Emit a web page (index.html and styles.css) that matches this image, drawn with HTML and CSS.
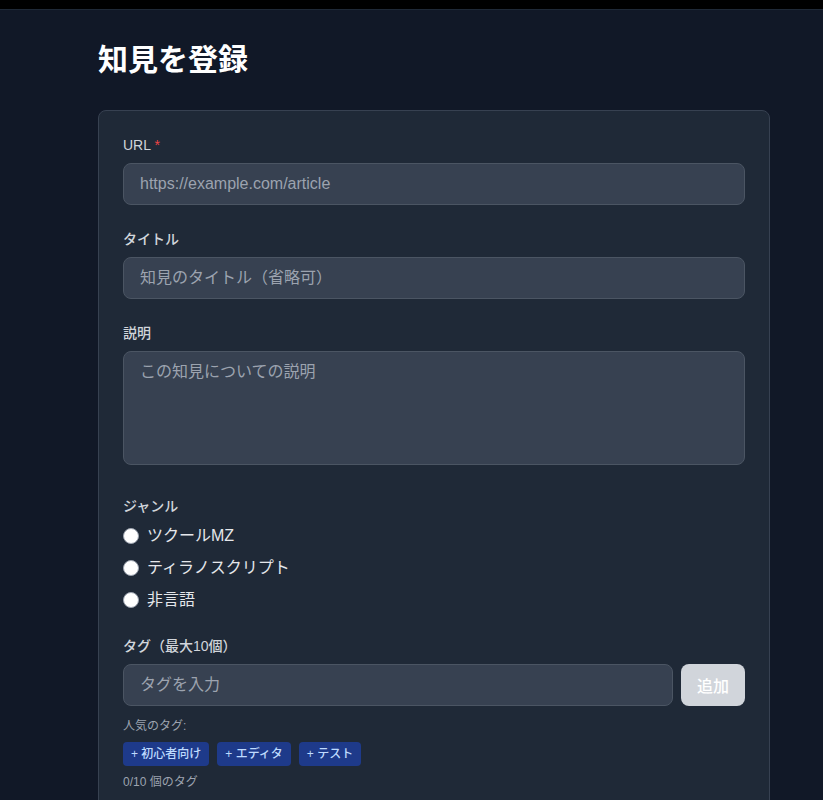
FILE: index.html
```html
<!DOCTYPE html>
<html lang="ja">
<head>
<meta charset="utf-8">
<title>知見を登録</title>
<link rel="stylesheet" href="styles.css">
</head>
<body>
<div class="topbar"></div>
<main class="page">
  <h1 class="title">知見を登録</h1>
  <form class="card">
    <div class="field">
      <label class="label">URL <span class="req">*</span></label>
      <input class="input" type="text" placeholder="https://example.com/article">
    </div>
    <div class="field">
      <label class="label">タイトル</label>
      <input class="input" type="text" placeholder="知見のタイトル（省略可）">
    </div>
    <div class="field">
      <label class="label">説明</label>
      <textarea class="input textarea" rows="4" placeholder="この知見についての説明"></textarea>
    </div>
    <div class="field">
      <label class="label">ジャンル</label>
      <div class="radios">
        <label class="radio"><input type="radio" name="genre"><span>ツクールMZ</span></label>
        <label class="radio"><input type="radio" name="genre"><span>ティラノスクリプト</span></label>
        <label class="radio"><input type="radio" name="genre"><span>非言語</span></label>
      </div>
    </div>
    <div class="field">
      <label class="label">タグ（最大10個）</label>
      <div class="tagrow">
        <input class="input tag-input" type="text" placeholder="タグを入力">
        <button class="add-btn" type="button">追加</button>
      </div>
      <p class="popular-label">人気のタグ:</p>
      <div class="chips">
        <button class="chip" type="button">+ 初心者向け</button>
        <button class="chip" type="button">+ エディタ</button>
        <button class="chip" type="button">+ テスト</button>
      </div>
      <p class="count">0/10 個のタグ</p>
    </div>
  </form>
</main>
</body>
</html>
```

FILE: styles.css
```css
* { box-sizing: border-box; }
html, body { margin: 0; padding: 0; }
body {
  background: #111827;
  color: #f3f4f6;
  font-family: "Liberation Sans", "Noto Sans CJK JP", sans-serif;
}
.topbar {
  height: 10px;
  background: #000;
  border-bottom: 1px solid #1f2937;
}
.page {
  padding: 32px 0 40px 98px;
}
.title {
  margin: 0 0 32px;
  font-size: 30px;
  line-height: 36px;
  font-weight: 700;
  color: #fff;
}
.card {
  width: 672px;
  background: #1f2937;
  border: 1px solid #374151;
  border-radius: 8px;
  padding: 24px;
  display: flex;
  flex-direction: column;
  gap: 24px;
}
.field { display: flex; flex-direction: column; }
.label {
  display: block;
  font-size: 14px;
  line-height: 20px;
  font-weight: 500;
  color: #d1d5db;
  margin-bottom: 8px;
}
.req { color: #ef4444; }
.input {
  display: block;
  width: 100%;
  height: 42px;
  padding: 8px 16px;
  font: inherit;
  font-size: 16px;
  line-height: 24px;
  color: #fff;
  background: #374151;
  border: 1px solid #4b5563;
  border-radius: 8px;
  outline: none;
}
.input::placeholder { color: #9ca3af; }
.textarea {
  height: 114px;
  resize: none;
  margin-bottom: 7px;
}
.radios { display: flex; flex-direction: column; gap: 8px; }
.radio {
  display: flex;
  align-items: center;
  gap: 8px;
  font-size: 16px;
  line-height: 24px;
  color: #e5e7eb;
}
.radio input {
  appearance: none;
  -webkit-appearance: none;
  margin: 0;
  width: 16px;
  height: 16px;
  border-radius: 50%;
  background: #fff;
  border: 1px solid #9ca3af;
}
.tagrow { display: flex; gap: 8px; }
.tag-input { flex: 1; width: auto; }
.add-btn {
  width: 64px;
  height: 42px;
  padding: 0 16px;
  font: inherit;
  font-size: 16px;
  font-weight: 500;
  color: #fff;
  background: #d1d5db;
  border: none;
  border-radius: 8px;
}
.popular-label {
  margin: 12px 0 8px;
  font-size: 12px;
  line-height: 16px;
  color: #9ca3af;
}
.chips { display: flex; gap: 8px; }
.chip {
  height: 24px;
  padding: 4px 8px;
  font: inherit;
  font-size: 12px;
  line-height: 16px;
  font-weight: 500;
  color: #bfdbfe;
  background: #1e3a8a;
  border: none;
  border-radius: 4px;
}
.count {
  margin: 8px 0 0;
  font-size: 12px;
  line-height: 16px;
  color: #9ca3af;
}
```
